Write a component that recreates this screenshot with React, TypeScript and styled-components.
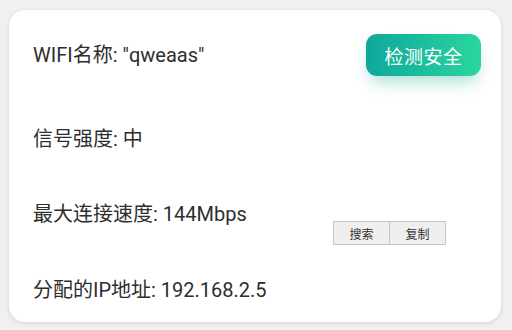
import React from 'react';
import styled, { createGlobalStyle } from 'styled-components';

const GlobalStyle = createGlobalStyle`
  html, body {
    margin: 0;
    padding: 0;
    background: #eff0f2;
  }
  body {
    font-family: Roboto, "Noto Sans CJK SC", sans-serif;
  }
`;

const Page = styled.div`
  width: 512px;
  height: 330px;
  padding: 10px 11px 8px 9px;
  box-sizing: border-box;
`;

const Card = styled.div`
  position: relative;
  height: 312px;
  box-sizing: border-box;
  background: #ffffff;
  border-radius: 16px;
  box-shadow: 0 1px 4px rgba(0, 0, 0, 0.12);
  padding: 24px 20px 19px 24px;
  display: flex;
  flex-direction: column;
  justify-content: space-between;
`;

const Row = styled.div`
  display: flex;
  align-items: center;
  justify-content: space-between;
  min-height: 26px;
`;

const Label = styled.span`
  font-size: 20px;
  line-height: 26px;
  color: #2e2e2e;
`;

const CheckButton = styled.button`
  width: 115px;
  height: 42px;
  border: none;
  border-radius: 11px;
  background: linear-gradient(90deg, #0fa79b 0%, #2ad69f 100%);
  box-shadow: 0 10px 16px -4px rgba(20, 170, 140, 0.35);
  color: #ffffff;
  font-family: "Noto Sans CJK SC", sans-serif;
  font-size: 19px;
  letter-spacing: 0.5px;
  cursor: pointer;
`;

const PopMenu = styled.div`
  position: absolute;
  left: 324px;
  top: 211px;
  display: flex;
`;

const PopItem = styled.button<{ $first?: boolean }>`
  width: ${p => (p.$first ? '57px' : '56px')};
  height: 24px;
  box-sizing: border-box;
  border: 1px solid #c6c6c6;
  border-left: ${p => (p.$first ? '1px solid #c6c6c6' : 'none')};
  background: #efefef;
  color: #333;
  font-family: "Noto Sans CJK SC", sans-serif;
  font-size: 12px;
  padding: 0;
`;

export default function App() {
  const rows = [
    '信号强度: 中',
    '最大连接速度: 144Mbps',
    '分配的IP地址: 192.168.2.5',
  ];
  return (
    <>
      <GlobalStyle />
      <Page>
        <Card>
          <Row>
            <Label>WIFI名称: "qweaas"</Label>
            <CheckButton>检测安全</CheckButton>
          </Row>
          {rows.map(r => (
            <Row key={r}>
              <Label>{r}</Label>
            </Row>
          ))}
          <PopMenu>
            <PopItem $first>搜索</PopItem>
            <PopItem>复制</PopItem>
          </PopMenu>
        </Card>
      </Page>
    </>
  );
}
